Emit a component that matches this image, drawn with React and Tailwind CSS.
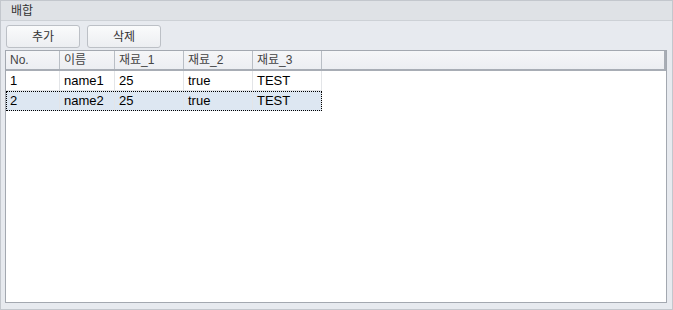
export default function App() {
  const columns = [
    { label: 'No.', w: 'w-[54px]' },
    { label: '이름', w: 'w-[55px]' },
    { label: '재료_1', w: 'w-[69px]' },
    { label: '재료_2', w: 'w-[69px]' },
    { label: '재료_3', w: 'w-[69px]' },
  ]
  const rows = [
    ['1', 'name1', '25', 'true', 'TEST'],
    ['2', 'name2', '25', 'true', 'TEST'],
  ]

  return (
    <div
      className="w-[673px] h-[310px] bg-[#e7eaef] border border-[#c3c7cd] flex flex-col text-[12px]"
      style={{ fontFamily: '"Liberation Sans", "Noto Sans CJK KR", sans-serif' }}
    >
      {/* Title bar */}
      <div className="h-[20px] flex items-center px-[10px] bg-[#dfe2e6] border-b border-[#cdd1d6] text-[#333]">
        배합
      </div>

      {/* Toolbar */}
      <div className="flex gap-[7px] px-[5px] pt-[4px] h-[29px]">
        <button className="w-[74px] h-[23px] rounded-[3px] border border-[#bcc0c6] bg-gradient-to-b from-[#fafbfc] to-[#eceef1] text-[#333]">
          추가
        </button>
        <button className="w-[74px] h-[23px] rounded-[3px] border border-[#bcc0c6] bg-gradient-to-b from-[#fafbfc] to-[#eceef1] text-[#333]">
          삭제
        </button>
      </div>

      {/* Grid */}
      <div className="ml-[4px] mr-[5px] h-[253px] border border-[#a3a8b0] bg-white flex flex-col">
        <div className="flex h-[20px] bg-gradient-to-b from-[#f5f6f8] to-[#eceef2] border-b-2 border-[#a8adb5]">
          {columns.map((c) => (
            <div
              key={c.label}
              className={`${c.w} border-r border-[#b9bec5] pl-[4px] flex items-center text-[#444]`}
            >
              {c.label}
            </div>
          ))}
          <div className="flex-1 border-r-2 border-[#a8adb5]" />
        </div>
        {rows.map((r, i) => {
          const selected = i === 1
          return (
            <div
              key={i}
              className={
                selected
                  ? 'flex h-[20px] w-[316px] bg-[#dde7f2] outline-1 outline-dotted outline-black -outline-offset-1'
                  : 'flex h-[20px] w-[316px] border-b border-[#e3e5e8]'
              }
            >
              {r.map((v, j) => (
                <div
                  key={j}
                  className={`${columns[j].w} pl-[4px] flex items-center text-black border-r border-[#e3e5e8] text-[13px]`}
                >
                  {v}
                </div>
              ))}
            </div>
          )
        })}
      </div>
    </div>
  )
}
